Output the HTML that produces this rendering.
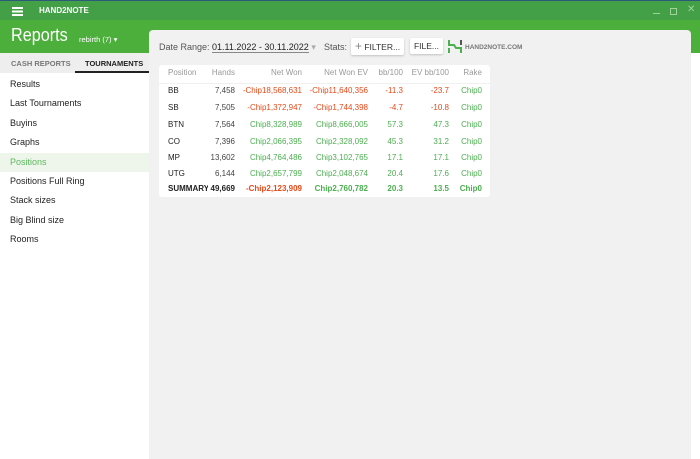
<!DOCTYPE html>
<html><head><style>
*{margin:0;padding:0;box-sizing:border-box}
body{width:700px;height:459px;overflow:hidden;background:#fff;font-family:"Liberation Sans",sans-serif;position:relative}
.tb{position:absolute;left:0;top:0;width:700px;height:20px;background:#43a047;border-top:1px solid #2d5a7a}
.hd{position:absolute;left:0;top:20px;width:700px;height:33px;background:#4caf3c}
.gray{position:absolute;left:149px;top:30px;width:542px;height:429px;background:#f1f1f1;border-top-right-radius:4px;border-top-left-radius:4px}
.left{position:absolute;left:0;top:53px;width:149px;height:406px;background:#fff}
.tabs{height:20px;background:#eeeeee;position:relative;font-size:7.5px;font-weight:bold}
.tabs span{position:absolute;top:6px}
.nav div{height:19.4px;font-size:9px;color:#222;padding-left:10px;line-height:19px}
.t{position:absolute;font-size:9px;color:#555}
.card{position:absolute;left:159px;top:65px;width:331px;height:132px;background:#fff;border-radius:3px}
.r{position:absolute;font-size:8px;text-align:right}
.btn{position:absolute;background:#fff;border-radius:2px;box-shadow:0 1px 2px rgba(0,0,0,.2);font-size:8.5px;color:#333;line-height:16px;text-align:center}
</style></head><body>
<div class="tb">
<div style="position:absolute;left:12px;top:6px;width:11px;height:1.5px;background:#fff;box-shadow:0 3.5px 0 #fff,0 7px 0 #fff"></div>
<div style="position:absolute;left:39px;top:5px;color:#fff;font-size:8px;font-weight:bold">HAND2NOTE</div>
<div style="position:absolute;left:653px;top:12px;width:7px;height:1px;background:#9fd39a"></div>
<div style="position:absolute;left:670px;top:7px;width:7px;height:7px;border:1px solid #9fd39a"></div>
<div style="position:absolute;left:687px;top:3px;color:#9fd39a;font-size:10px">✕</div>
</div>
<div class="hd">
<div style="position:absolute;left:11px;top:5px;color:#fff;font-size:18px;transform:scaleX(0.9);transform-origin:left">Reports</div>
<div style="position:absolute;left:79px;top:15px;color:#fff;font-size:7.5px">rebirth (7) ▾</div>
</div>
<div class="gray"></div>
<div class="left">
<div class="tabs"><span style="left:11px;color:#777">CASH REPORTS</span><span style="left:85px;color:#222">TOURNAMENTS</span>
<div style="position:absolute;left:75px;top:18px;width:74px;height:2px;background:#222"></div></div>
<div class="nav" style="margin-top:2px">
<div>Results</div><div>Last Tournaments</div><div>Buyins</div><div>Graphs</div>
<div style="background:#eef6ec;color:#5cb85c">Positions</div>
<div>Positions Full Ring</div><div>Stack sizes</div><div>Big Blind size</div><div>Rooms</div>
</div></div>
<div class="t" style="left:159px;top:42px">Date Range: <span style="color:#222;border-bottom:1px solid #888">01.11.2022 - 30.11.2022</span> <span style="color:#aaa">▾</span></div>
<div class="t" style="left:324px;top:42px">Stats:</div>
<div class="btn" style="left:351px;top:38px;width:53px"><span style="color:#888;font-size:12px">+</span> FILTER...</div>
<div class="btn" style="left:410px;top:38px;width:33px">FILE...</div>
<svg style="position:absolute;left:448px;top:40px" width="14" height="13"><path d="M1 0V5H6L8 8H13V13M1 8V13" stroke="#4caf50" stroke-width="2" fill="none"/><path d="M13 0V5" stroke="#555" stroke-width="2"/></svg>
<div style="position:absolute;left:465px;top:44px;font-size:6.5px;font-weight:bold;color:#777">HAND2NOTE.COM</div>
<div class="card">
<div style="position:absolute;left:0;top:18px;width:331px;height:1px;background:#f0f0f0"></div>
</div>
<div id="tbl"></div>
<script>
var rows=[["Position","Hands","Net Won","Net Won  EV","bb/100","EV bb/100","Rake","h"],
["BB","7,458","-Chip18,568,631","-Chip11,640,356","-11.3","-23.7","Chip0","rr"],
["SB","7,505","-Chip1,372,947","-Chip1,744,398","-4.7","-10.8","Chip0","rr"],
["BTN","7,564","Chip8,328,989","Chip8,666,005","57.3","47.3","Chip0","gg"],
["CO","7,396","Chip2,066,395","Chip2,328,092","45.3","31.2","Chip0","gg"],
["MP","13,602","Chip4,764,486","Chip3,102,765","17.1","17.1","Chip0","gg"],
["UTG","6,144","Chip2,657,799","Chip2,048,674","20.4","17.6","Chip0","gg"],
["SUMMARY","49,669","-Chip2,123,909","Chip2,760,782","20.3","13.5","Chip0","rgb"]];
var ys=[68,86,103,120,137,153,169,184],rights=[235,302,368,403,449,482],h="";
rows.forEach(function(r,i){var y=ys[i],t=r[7],b=t=="rgb"?"font-weight:bold;":"";
var hc=i==0?"#999":"#333";
h+='<div class="r" style="left:168px;top:'+y+'px;text-align:left;color:'+(i==0?"#999":"#222")+';'+b+'width:40px;overflow:hidden;white-space:nowrap">'+r[0]+'</div>';
for(var j=1;j<7;j++){var c=hc;if(i>0&&j>1){c=(t[0]=="r"&&j==2)||(t=="rr")?"#e64a19":"#4caf50";if(t=="rr"&&j==6)c="#4caf50";}
if(i>0&&j==1)c=i==7?"#222":"#444";
h+='<div class="r" style="left:'+(rights[j-1]-90)+'px;width:90px;top:'+y+'px;color:'+c+';'+b+'">'+r[j]+'</div>';}
});
document.getElementById("tbl").innerHTML=h;
</script>
</body></html>
